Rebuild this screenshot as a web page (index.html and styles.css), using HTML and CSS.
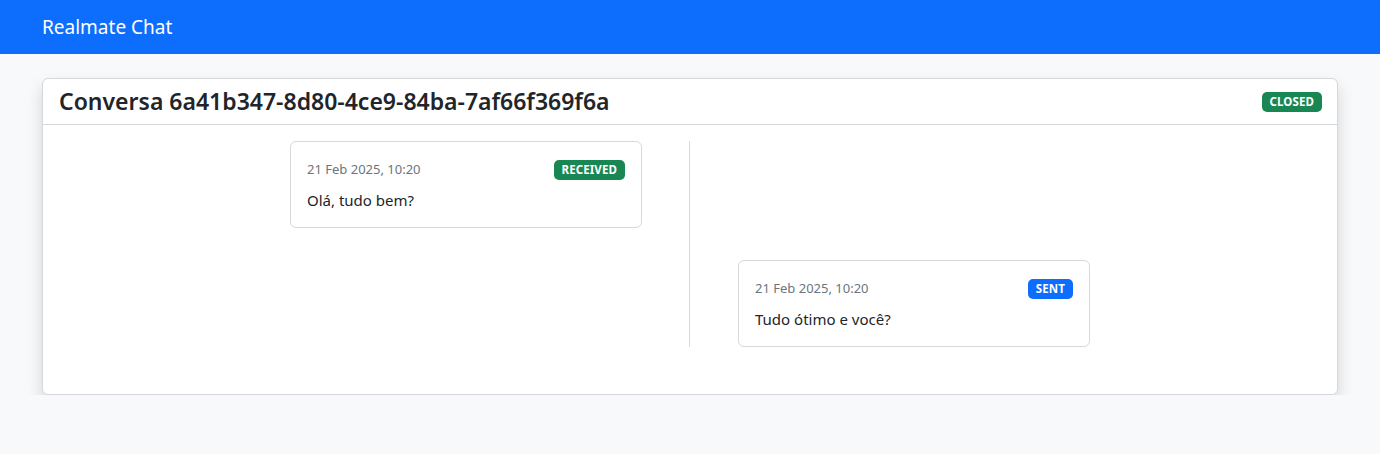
FILE: index.html
```html
<!DOCTYPE html>
<html lang="pt">
<head>
<meta charset="utf-8">
<title>Realmate Chat</title>
<link rel="stylesheet" href="styles.css">
</head>
<body>
<nav class="navbar">
  <span class="brand">Realmate Chat</span>
</nav>
<main class="page">
  <section class="card">
    <header class="card-header">
      <h1 class="title">Conversa 6a41b347-8d80-4ce9-84ba-7af66f369f6a</h1>
      <span class="badge badge-green">CLOSED</span>
    </header>
    <div class="card-body">
      <div class="thread">
        <div class="col col-left">
          <article class="msg">
            <div class="msg-head">
              <span class="msg-date">21 Feb 2025, 10:20</span>
              <span class="badge badge-green">RECEIVED</span>
            </div>
            <p class="msg-text">Olá, tudo bem?</p>
          </article>
        </div>
        <div class="col col-right"></div>
        <div class="col col-left"></div>
        <div class="col col-right">
          <article class="msg">
            <div class="msg-head">
              <span class="msg-date">21 Feb 2025, 10:20</span>
              <span class="badge badge-blue">SENT</span>
            </div>
            <p class="msg-text">Tudo ótimo e você?</p>
          </article>
        </div>
      </div>
    </div>
  </section>
</main>
</body>
</html>
```
FILE: styles.css
```css
* { box-sizing: border-box; }
html, body { margin: 0; }
body {
  background: #f8f9fa;
  font-family: "Noto Sans", "Open Sans", "Liberation Sans", sans-serif;
  color: #212529;
  font-size: 16px;
  line-height: 1.5;
}
.navbar {
  background: #0d6efd;
  height: 54px;
  display: flex;
  align-items: center;
  padding: 0 42px;
}
.brand {
  color: #fff;
  font-size: 19px;
  line-height: 1;
}
.page {
  padding: 24px 42px 0 42px;
}
.card {
  background: #fff;
  border: 1px solid #d6d8db;
  border-radius: 6px;
  box-shadow: 0 8px 16px rgba(0,0,0,.15);
}
.card-header {
  display: flex;
  align-items: center;
  justify-content: space-between;
  height: 46px;
  padding: 0 15px 0 16px;
  border-bottom: 1px solid #d6d8db;
}
.title {
  margin: 0;
  font-size: 23px;
  font-weight: 600;
  line-height: 1;
}
.badge {
  display: inline-block;
  color: #fff;
  font-weight: 700;
  font-size: 11.5px;
  line-height: 12px;
  padding: 4px 8px;
  border-radius: 5px;
  letter-spacing: 0.1px;
}
.badge-green { background: #198754; }
.badge-blue { background: #0d6efd; }
.card-body {
  padding: 16px 16px 47px 16px;
}
.thread {
  display: grid;
  grid-template-columns: 1fr 1fr;
  row-gap: 32px;
  position: relative;
}
.thread::after {
  content: "";
  position: absolute;
  left: 50%;
  top: 0;
  bottom: 0;
  width: 1px;
  margin-left: -1px;
  background: #d6d8db;
}
.col { display: flex; }
.col-left { justify-content: flex-end; padding-right: 48px; }
.col-right { justify-content: flex-start; padding-left: 48px; }
.msg {
  width: 352px;
  height: 87px;
  border: 1px solid #d6d8db;
  border-radius: 6px;
  padding: 17px 16px 0 16px;
}
.msg-head {
  display: flex;
  justify-content: space-between;
  align-items: center;
  height: 22px;
}
.msg-date {
  font-size: 13px;
  color: #6c757d;
}
.msg-text {
  margin: 8px 0 0 0;
  font-size: 15px;
}
```
